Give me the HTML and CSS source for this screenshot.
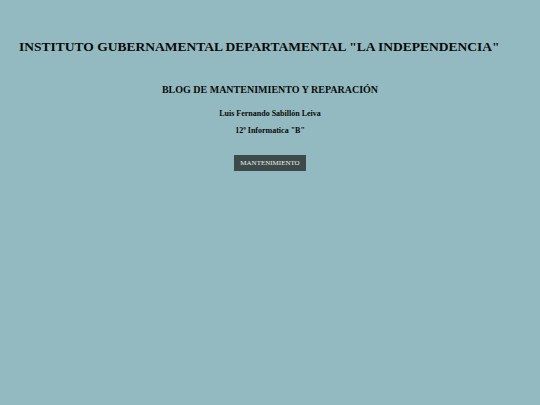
FILE: index.html
```html
<!DOCTYPE html>
<html lang="es">
<head>
<meta charset="utf-8">
<link rel="stylesheet" href="styles.css">
</head>
<body>
<header class="site-header">
  <h1 class="title">INSTITUTO GUBERNAMENTAL DEPARTAMENTAL "LA INDEPENDENCIA"</h1>
</header>
<main class="content">
  <h2 class="subtitle">BLOG DE MANTENIMIENTO Y REPARACIÓN</h2>
  <p class="author">Luis Fernando Sabillón Leiva</p>
  <p class="author">12º Informatica "B"</p>
  <div class="actions">
    <a class="btn" href="#">MANTENIMIENTO</a>
  </div>
</main>
</body>
</html>
```

FILE: styles.css
```css
html, body {
  margin: 0;
  padding: 0;
}
body {
  background: #93bac0;
  font-family: "Liberation Serif", "Times New Roman", serif;
  color: #0a0a0a;
  width: 540px;
  height: 405px;
}
.site-header {
  padding: 39px 0 0 19px;
}
.title {
  margin: 0;
  font-size: 13.5px;
  font-weight: bold;
  line-height: 15px;
  white-space: nowrap;
}
.content {
  display: flex;
  flex-direction: column;
  align-items: center;
  padding-top: 30px;
}
.subtitle {
  margin: 0 0 13px;
  font-size: 10px;
  font-weight: bold;
  line-height: 12px;
}
.author {
  margin: 0 0 8px;
  font-size: 8px;
  font-weight: bold;
  line-height: 9px;
}
.actions {
  margin-top: 8px;
}
.btn {
  display: inline-block;
  background: #3e4a4a;
  color: #e8eeee;
  font-size: 7px;
  text-decoration: none;
  padding: 4px 6px;
  line-height: 8px;
}
```
